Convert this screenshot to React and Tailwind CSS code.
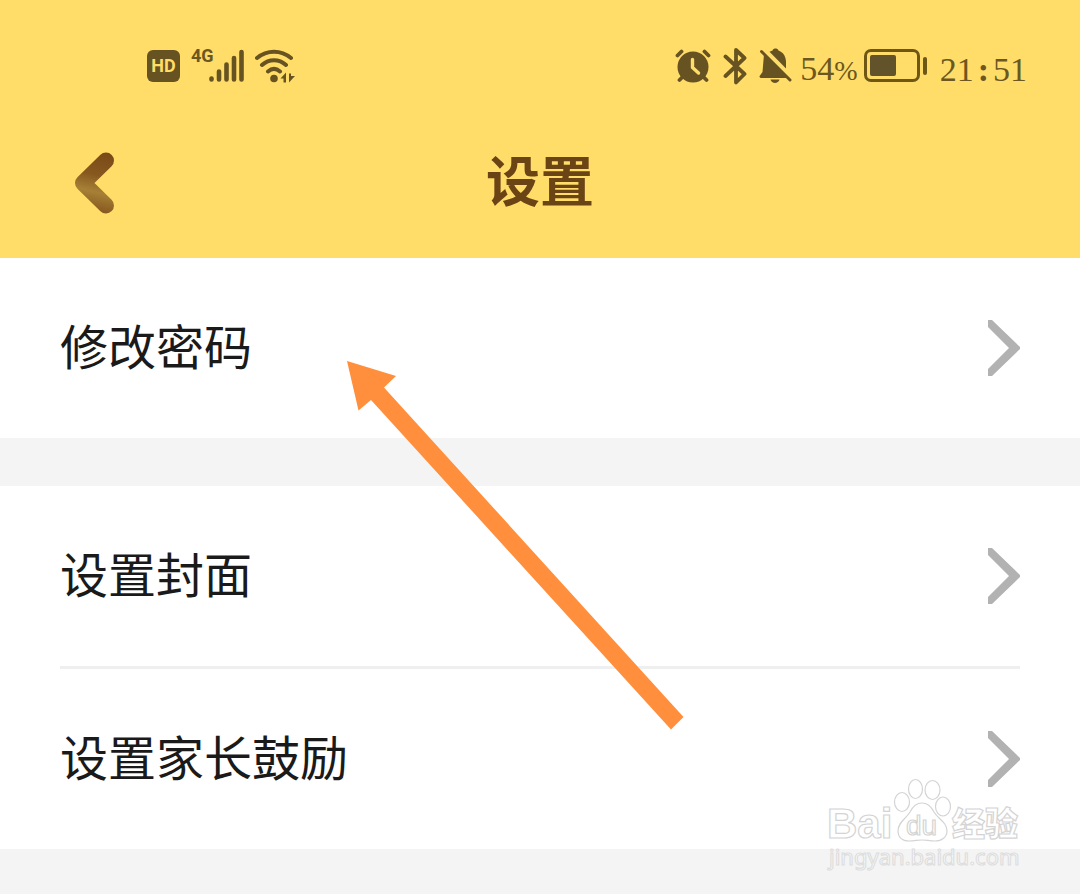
import React from "react";

const ROW_FONT = "font-['Noto_Sans_CJK_SC',sans-serif]";

function SignalIcon() {
  return (
    <svg width="36" height="34" viewBox="0 0 36 34" className="text-[#675322]" stroke="currentColor" strokeWidth="4.6" strokeLinecap="round" aria-hidden="true">
      <path d="M2.5 29.5v1M10 22.5v8M17.5 15.500v15M25 9v21.500M32.500 3v27.500" />
    </svg>
  );
}

function WifiIcon() {
  return (
    <svg width="42" height="36" viewBox="0 0 42 36" fill="none" className="text-[#675322]" stroke="currentColor" strokeWidth="4" strokeLinecap="round" aria-hidden="true">
      <path d="M2 10C12 1.500 26 1.500 36 10M7 17C14 10.500 24 10.500 31 17M13 23.500C17 20 21 20 25 23.500" />
      <circle cx="19" cy="30.500" r="3.800" fill="currentColor" stroke="none" />
      <path d="M31 24.500v10h-2.500v-4h-3zM34 34.500V25.500h2v2.500h4z" fill="currentColor" stroke="none" />
    </svg>
  );
}

function AlarmIcon() {
  return (
    <svg width="36" height="36" viewBox="0 0 36 36" fill="none" stroke="#675322" strokeLinecap="round" strokeLinejoin="round" aria-hidden="true">
      <path d="M2.500 7.500l4-4M29.500 3.500l4 4M4.500 32l4-4M31.500 32l-4-4" strokeWidth="3.800" />
      <circle cx="18" cy="19" r="15.500" fill="#675322" stroke="none" />
      <path d="M17.500 11.500v8l6 5.500" stroke="#ffdd68" strokeWidth="3.400" />
    </svg>
  );
}

function BluetoothIcon() {
  return (
    <svg width="24" height="38" viewBox="0 0 24 38" fill="none" stroke="#675322" strokeWidth="3.800" strokeLinecap="round" strokeLinejoin="round" aria-hidden="true">
      <path d="M2.500 9.500L21.500 27l-8.500 8.500V3l8.500 8L2.500 29" />
    </svg>
  );
}

function MutedBellIcon() {
  return (
    <svg width="33" height="36" viewBox="0 0 33 36" fill="#675322" aria-hidden="true">
      <path d="M5 6L28 30H2a1.500 1.500 0 0 1-1-2.600L3.500 24z" />
      <path d="M10.500 3.800l3-1.300c1-2.600 5-2.600 6 0C25 4.500 27 9.500 27 14v6.500z" />
      <path d="M2.500 3.500L31 32" fill="none" stroke="#675322" strokeWidth="3" strokeLinecap="round" />
      <path d="M11.500 31.500h9c-1 4.600-8 4.600-9 0z" />
    </svg>
  );
}

function BatteryIcon() {
  return (
    <svg width="64" height="34" viewBox="0 0 64 34" aria-hidden="true">
      <rect x="1.500" y="1.500" width="53" height="30" rx="5.500" fill="none" stroke="#6e5714" strokeWidth="3" />
      <rect x="6" y="6" width="26" height="21" rx="2" fill="#63532a" />
      <rect x="59" y="8" width="4" height="18" rx="2" fill="#6e5714" />
    </svg>
  );
}

function StatusBar() {
  return (
    <div className="flex h-[108px] items-center justify-between pt-6 pr-[53px] pl-[147px] text-[#6b571f]">
      <div className="flex items-center">
        <span className="flex h-8 w-[33px] items-center justify-center rounded-md bg-[#675322] font-['Roboto',sans-serif] text-lg font-bold text-[#ffdd68]">
          HD
        </span>
        <span className="ml-[11px] w-[18px] self-start font-['Liberation_Sans_Narrow','Roboto',sans-serif] text-lg leading-4 font-bold whitespace-nowrap">
          4G
        </span>
        <SignalIcon />
        <span className="ml-[10px] flex">
          <WifiIcon />
        </span>
      </div>
      <div className="flex items-center font-['Liberation_Serif',serif] text-[34px] leading-9">
        <AlarmIcon />
        <span className="ml-3 flex">
          <BluetoothIcon />
        </span>
        <span className="ml-3 flex">
          <MutedBellIcon />
        </span>
        <span className="ml-2 pt-2">
          54<span className="text-[28px]">%</span>
        </span>
        <span className="ml-[6px] flex">
          <BatteryIcon />
        </span>
        <time className="ml-3 flex gap-1 pt-2">
          <span>21</span>
          <span className="font-bold">:</span>
          <span>51</span>
        </time>
      </div>
    </div>
  );
}

function BackIcon() {
  return (
    <svg width="42" height="64" viewBox="0 0 42 64" fill="none" aria-hidden="true">
      <defs>
        <linearGradient id="back-shade" x1="34" y1="0" x2="20" y2="64" gradientUnits="userSpaceOnUse">
          <stop offset="0" stopColor="#784816" />
          <stop offset="0.400" stopColor="#87591f" />
          <stop offset="0.650" stopColor="#a78036" />
          <stop offset="1" stopColor="#80501a" />
        </linearGradient>
      </defs>
      <path d="M32 9.500L9 32L32 54.500" stroke="url(#back-shade)" strokeWidth="16" strokeLinecap="round" strokeLinejoin="round" />
    </svg>
  );
}

function Row({ label }) {
  return (
    <button type="button" className="flex h-[180px] w-full items-center justify-between text-left">
      <span className={`${ROW_FONT} pb-2 text-5xl text-[#1a1a1a]`}>{label}</span>
      <svg width="32" height="56" viewBox="0 0 32 56" fill="#b2b2b2" aria-hidden="true">
        <path d="M0 0h4L32 27v2L4 56H0v-7l21-21L0 7z" />
      </svg>
    </button>
  );
}

function PointerArrow() {
  return (
    <svg className="pointer-events-none absolute top-[361px] left-[347px]" width="337" height="369" viewBox="0 0 337 369" aria-hidden="true">
      <path d="M0 0L49 15L37 26.500L336.500 356L324 368.500L24 39L11.500 49.500z" fill="#ff8f3c" />
    </svg>
  );
}

function Watermark() {
  return (
    <svg
      className="pointer-events-none absolute right-[50px] bottom-5"
      width="206"
      height="100"
      viewBox="0 0 206 100"
      fill="#ffffff"
      stroke="#d4d4d4"
      strokeWidth="1.2"
    >
      <text x="3" y="64" fontSize="42" fontWeight="bold" fontFamily="'Liberation Sans', sans-serif">Bai</text>
      <ellipse cx="78" cy="28" rx="7.500" ry="9.500" />
      <ellipse cx="91.500" cy="15" rx="7" ry="9.500" />
      <ellipse cx="108.500" cy="16" rx="7.500" ry="9.500" />
      <ellipse cx="119" cy="32.500" rx="7.500" ry="9.500" />
      <path d="M98 29c-6 0-9 3-12 9-4 7-12 10-12 19 0 6 4 10 11 10 5 0 9-1 13-1s8 1 13 1c7 0 12-4 12-10 0-9-9-12-13-19-3-6-6-9-12-9z" />
      <text x="82" y="61" fontSize="28" fontFamily="'Liberation Sans', sans-serif">du</text>
      <text x="128" y="62" fontSize="33" fontWeight="900" fontFamily="'Noto Sans CJK SC', sans-serif">经验</text>
      <text x="5" y="91" fontSize="22" fontFamily="'Noto Sans', sans-serif" stroke="#dedede">jingyan.baidu.com</text>
    </svg>
  );
}

export default function App() {
  return (
    <div className="relative min-h-screen bg-[#f4f4f4]">
      <header className="bg-[#ffdd68]">
        <StatusBar />
        <div className="grid h-[150px] grid-cols-[1fr_auto_1fr] items-center px-[74px]">
          <button type="button" aria-label="返回" className="justify-self-start">
            <BackIcon />
          </button>
          <h1 className={`${ROW_FONT} pb-2 text-[54px] leading-none font-bold text-[#6b4415]`}>设置</h1>
        </div>
      </header>
      <main className="flex flex-col gap-12">
        <section className="bg-white px-[60px]">
          <Row label="修改密码" />
        </section>
        <section className="bg-white px-[60px]">
          <Row label="设置封面" />
          <hr className="border-t-[3px] border-[#efefef]" />
          <Row label="设置家长鼓励" />
        </section>
      </main>
      <PointerArrow />
      <Watermark />
    </div>
  );
}
